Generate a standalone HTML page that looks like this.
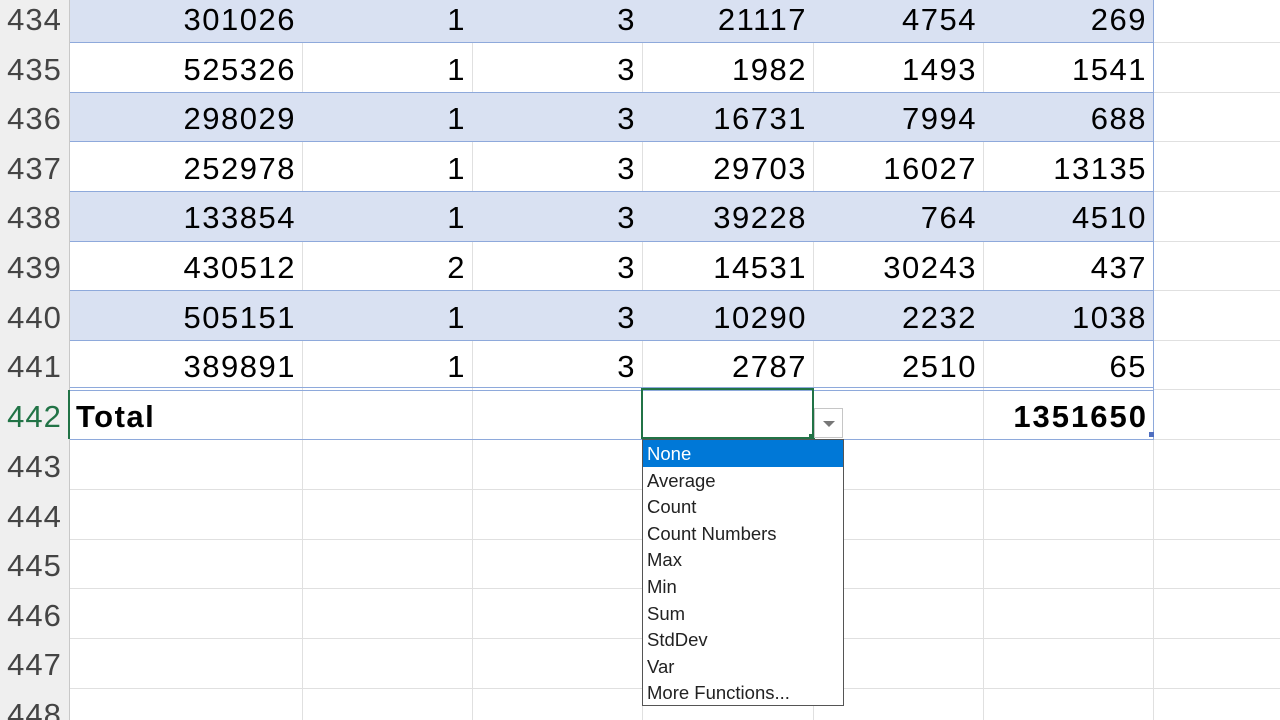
<!DOCTYPE html>
<html><head><meta charset="utf-8"><style>
html,body{margin:0;width:1280px;height:720px;overflow:hidden}
body{background:#fff;font-family:"Liberation Sans",sans-serif;position:relative}
.hdr{position:absolute;left:0;top:0;width:69px;height:720px;background:#efefef;border-right:1px solid #c8c8c8}
.r{position:absolute;left:0;width:1280px;height:49.6px}
.r div{position:absolute;top:0;height:100%;line-height:53px;font-size:31px;color:#000;box-sizing:border-box;text-align:right;padding-right:6px;letter-spacing:1.5px}
.r .h{left:0;width:69px;text-align:center;padding:0;color:#444;font-size:31px;letter-spacing:1px}
.vl{position:absolute;top:0;width:1px;height:720px;background:#e0e0e0}
.hl{position:absolute;left:70px;width:1210px;height:1px;background:#e0e0e0}
.band{position:absolute;left:70px;width:1083px;background:#d9e1f2}
.bl{position:absolute;left:70px;width:1083px;height:1px;background:#8ea9db}
.menu{position:absolute;left:642px;top:439px;width:202px;height:267px;background:#fff;border:1px solid #555;font-size:18.5px;box-sizing:border-box}
.menu div{height:26.6px;line-height:28px;padding-left:4px;color:#222}
</style></head><body>
<div class="hdr"></div>
<div class="vl" style="left:302px"></div><div class="vl" style="left:472px"></div><div class="vl" style="left:642px"></div><div class="vl" style="left:813px"></div><div class="vl" style="left:983px"></div><div class="vl" style="left:1153px"></div>
<div class="hl" style="top:489px"></div><div class="hl" style="top:539px"></div><div class="hl" style="top:588px"></div><div class="hl" style="top:638px"></div><div class="hl" style="top:688px"></div>
<div class="hl" style="top:42px;left:1153px;width:127px"></div><div class="hl" style="top:92px;left:1153px;width:127px"></div><div class="hl" style="top:141px;left:1153px;width:127px"></div><div class="hl" style="top:191px;left:1153px;width:127px"></div><div class="hl" style="top:241px;left:1153px;width:127px"></div><div class="hl" style="top:290px;left:1153px;width:127px"></div><div class="hl" style="top:340px;left:1153px;width:127px"></div><div class="hl" style="top:389px;left:1153px;width:127px"></div><div class="hl" style="top:439px;left:1153px;width:127px"></div>
<div class="band" style="top:0;height:42px"></div>
<div class="band" style="top:92px;height:49px"></div>
<div class="band" style="top:191px;height:50px"></div>
<div class="band" style="top:290px;height:50px"></div>
<div class="bl" style="top:42px"></div><div class="bl" style="top:92px"></div><div class="bl" style="top:141px"></div><div class="bl" style="top:191px"></div><div class="bl" style="top:241px"></div><div class="bl" style="top:290px"></div><div class="bl" style="top:340px"></div><div class="bl" style="top:387px"></div><div class="bl" style="top:390px"></div><div class="bl" style="top:439px"></div>
<div style="position:absolute;left:1153px;top:0;width:1px;height:440px;background:#8ea9db"></div>

<div class="r" style="top:-7px"><div class="h">434</div><div style="left:70px;width:232px">301026</div><div style="left:302px;width:170px">1</div><div style="left:472px;width:170px">3</div><div style="left:642px;width:171px">21117</div><div style="left:813px;width:170px">4754</div><div style="left:983px;width:170px">269</div></div>
<div class="r" style="top:43px"><div class="h">435</div><div style="left:70px;width:232px">525326</div><div style="left:302px;width:170px">1</div><div style="left:472px;width:170px">3</div><div style="left:642px;width:171px">1982</div><div style="left:813px;width:170px">1493</div><div style="left:983px;width:170px">1541</div></div>
<div class="r" style="top:92px"><div class="h">436</div><div style="left:70px;width:232px">298029</div><div style="left:302px;width:170px">1</div><div style="left:472px;width:170px">3</div><div style="left:642px;width:171px">16731</div><div style="left:813px;width:170px">7994</div><div style="left:983px;width:170px">688</div></div>
<div class="r" style="top:142px"><div class="h">437</div><div style="left:70px;width:232px">252978</div><div style="left:302px;width:170px">1</div><div style="left:472px;width:170px">3</div><div style="left:642px;width:171px">29703</div><div style="left:813px;width:170px">16027</div><div style="left:983px;width:170px">13135</div></div>
<div class="r" style="top:191px"><div class="h">438</div><div style="left:70px;width:232px">133854</div><div style="left:302px;width:170px">1</div><div style="left:472px;width:170px">3</div><div style="left:642px;width:171px">39228</div><div style="left:813px;width:170px">764</div><div style="left:983px;width:170px">4510</div></div>
<div class="r" style="top:241px"><div class="h">439</div><div style="left:70px;width:232px">430512</div><div style="left:302px;width:170px">2</div><div style="left:472px;width:170px">3</div><div style="left:642px;width:171px">14531</div><div style="left:813px;width:170px">30243</div><div style="left:983px;width:170px">437</div></div>
<div class="r" style="top:291px"><div class="h">440</div><div style="left:70px;width:232px">505151</div><div style="left:302px;width:170px">1</div><div style="left:472px;width:170px">3</div><div style="left:642px;width:171px">10290</div><div style="left:813px;width:170px">2232</div><div style="left:983px;width:170px">1038</div></div>
<div class="r" style="top:340px"><div class="h">441</div><div style="left:70px;width:232px">389891</div><div style="left:302px;width:170px">1</div><div style="left:472px;width:170px">3</div><div style="left:642px;width:171px">2787</div><div style="left:813px;width:170px">2510</div><div style="left:983px;width:170px">65</div></div>
<div class="r" style="top:390px"><div class="h" style="color:#217346">442</div><div style="left:70px;width:232px;text-align:left;padding-left:6px;font-weight:bold;letter-spacing:1.5px">Total</div><div style="left:983px;width:170px;font-weight:bold;letter-spacing:2px;padding-right:5px">1351650</div></div>
<div class="r" style="top:440px"><div class="h">443</div></div>
<div class="r" style="top:490px"><div class="h">444</div></div>
<div class="r" style="top:539px"><div class="h">445</div></div>
<div class="r" style="top:589px"><div class="h">446</div></div>
<div class="r" style="top:638px"><div class="h">447</div></div>
<div class="r" style="top:688px"><div class="h">448</div></div>
<div style="position:absolute;left:68px;top:390px;width:2px;height:49px;background:#217346"></div>
<div style="position:absolute;left:1149px;top:432px;width:5px;height:5px;background:#4f6fc0"></div>
<div style="position:absolute;left:641px;top:388px;width:173px;height:51px;border:2px solid #217346;box-sizing:border-box"></div>
<div style="position:absolute;left:809px;top:434px;width:6px;height:6px;background:#217346"></div>
<div style="position:absolute;left:814px;top:408px;width:29px;height:30px;background:#fff;border:1px solid #c6c6c6;box-sizing:border-box"><div style="position:absolute;left:8px;top:12px;width:0;height:0;border-left:6px solid transparent;border-right:6px solid transparent;border-top:6px solid #777"></div></div>
<div class="menu">
<div style="background:#0078d7;color:#fff">None</div><div>Average</div><div>Count</div><div>Count Numbers</div><div>Max</div><div>Min</div><div>Sum</div><div>StdDev</div><div>Var</div><div>More Functions...</div>
</div>
</body></html>
